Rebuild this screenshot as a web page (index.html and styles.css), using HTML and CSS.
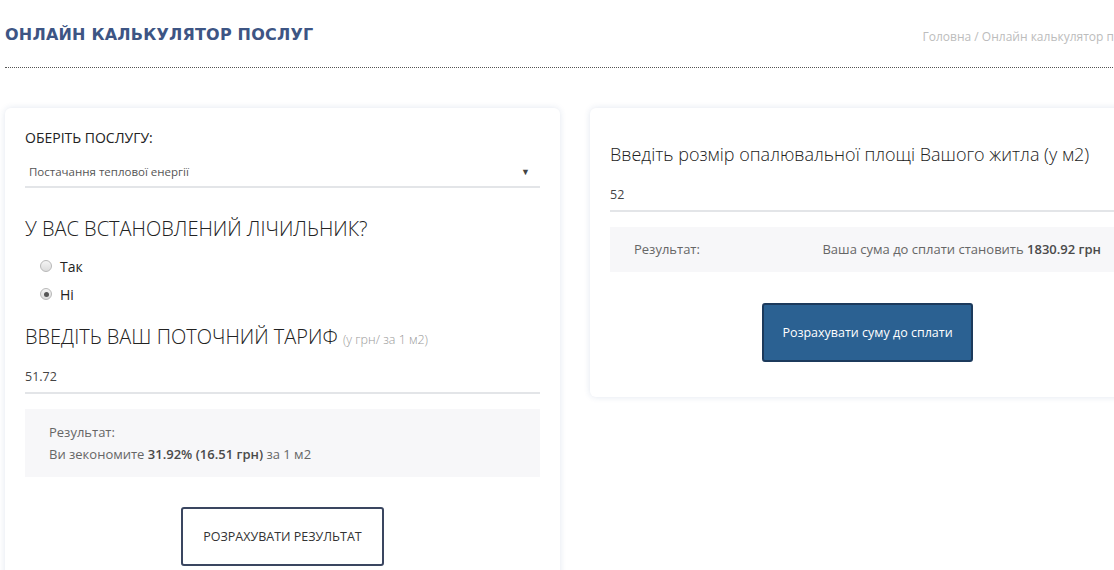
FILE: index.html
```html
<!DOCTYPE html>
<html lang="uk">
<head>
  <meta charset="UTF-8" />
  <title>Онлайн калькулятор послуг</title>
  <link rel="stylesheet" href="styles.css">
</head>
<body>
  <div class="page">
    <div class="page-head">
      <h1 class="page-title">ОНЛАЙН КАЛЬКУЛЯТОР ПОСЛУГ</h1>
      <div class="crumbs">Головна / Онлайн калькулятор послуг</div>
    </div>

    <div class="calc">
      <div class="card">
        <div class="label">ОБЕРІТЬ ПОСЛУГУ:</div>
        <div class="select">
          <span>Постачання теплової енергії</span>
          <span class="arrow">&#9660;</span>
        </div>

        <h3 class="question">У ВАС ВСТАНОВЛЕНИЙ ЛІЧИЛЬНИК?</h3>
        <div class="radios">
          <label class="radio"><input type="radio" name="meter" /> Так</label>
          <label class="radio"><input type="radio" name="meter" checked /> Ні</label>
        </div>

        <h3 class="question q-tariff">ВВЕДІТЬ ВАШ ПОТОЧНИЙ ТАРИФ <small>(у грн/ за 1 м2)</small></h3>
        <input type="text" class="field field-tariff" value="51.72" />

        <div class="result">
          <div>Результат:</div>
          <div>Ви зекономите <b>31.92% (16.51 грн)</b> за 1 м2</div>
        </div>

        <div class="actions">
          <button class="btn btn-outline">РОЗРАХУВАТИ РЕЗУЛЬТАТ</button>
        </div>
      </div>

      <div class="card card-area">
        <h3 class="area-title">Введіть розмір опалювальної площі Вашого житла (у м2)</h3>
        <input type="text" class="field field-area" value="52" />

        <div class="result result-row">
          <span>Результат:</span>
          <span>Ваша сума до сплати становить <b>1830.92 грн</b></span>
        </div>

        <div class="actions">
          <button class="btn btn-blue">Розрахувати суму до сплати</button>
        </div>
      </div>
    </div>
  </div>
</body>
</html>
```

FILE: styles.css
```css
* {
  box-sizing: border-box;
  margin: 0;
  padding: 0;
}

html, body {
  overflow: hidden;
}

body {
  background: #fff;
  font-family: "Open Sans", Arial, sans-serif;
  color: #333;
}

.page {
  width: 1140px;
  margin-left: 5px;
}

.page-head {
  display: flex;
  justify-content: space-between;
  align-items: center;
  height: 68px;
  padding-top: 2px;
  border-bottom: 1px dotted #555;
}

.page-title {
  font-family: "DejaVu Sans", sans-serif;
  font-size: 16px;
  font-weight: bold;
  color: #3d5584;
  letter-spacing: 0.2px;
}

.crumbs {
  font-size: 12px;
  color: #bcbcbc;
  padding-top: 4px;
}

.calc {
  display: grid;
  grid-template-columns: 555px 555px;
  gap: 30px;
  margin-top: 40px;
  align-items: start;
}

.card {
  background: #fff;
  border-radius: 6px;
  padding: 20px 20px 30px;
  box-shadow: 0 0 6px rgba(40, 80, 140, 0.14);
}

.label {
  font-size: 14px;
  line-height: 20px;
  font-weight: 500;
  color: #222;
}

.select {
  display: flex;
  justify-content: space-between;
  margin-top: 10px;
  padding: 5px 10px 5px 4px;
  font-size: 11.5px;
  line-height: 18px;
  color: #555;
  border-bottom: 2px solid #e3e5e8;
}

.arrow {
  font-size: 9px;
  color: #444;
}

.question {
  margin-top: 28px;
  font-size: 20px;
  line-height: 26px;
  font-weight: 300;
  color: #222;
}

.question small {
  font-size: 12.5px;
  color: #999;
}

.q-tariff {
  margin-top: 16px;
}

.radios {
  margin-top: 10px;
  padding-left: 15px;
}

.radio {
  display: flex;
  align-items: center;
  gap: 8px;
  height: 28px;
  font-size: 14px;
  font-weight: 500;
  color: #222;
}

.radio input {
  appearance: none;
  width: 12px;
  height: 12px;
  border-radius: 50%;
  border: 1px solid #b8b8b8;
  background: linear-gradient(#f4f4f4, #dcdcdc);
  display: grid;
  place-content: center;
}

.radio input:checked::before {
  content: "";
  width: 5px;
  height: 5px;
  border-radius: 50%;
  background: #555;
}

.field {
  display: block;
  width: 100%;
  border: none;
  border-bottom: 2px solid #e3e5e8;
  padding: 8px 0 7px;
  font-family: inherit;
  font-size: 12.5px;
  line-height: 18px;
  color: #444;
  outline: none;
}

.field-tariff {
  margin-top: 7px;
  padding-bottom: 6px;
}

.result {
  margin-top: 15px;
  padding: 12px 24px;
  background: #f7f7f9;
  font-size: 13px;
  line-height: 22px;
  color: #666;
}

.result b {
  font-weight: 600;
  color: #4a4a4a;
}

.actions {
  display: flex;
  justify-content: center;
  margin-top: 30px;
}

.btn {
  font-family: inherit;
  font-size: 12.5px;
  line-height: 18px;
  padding: 19px 20px 18px;
  border-radius: 3px;
  cursor: pointer;
}

.btn-outline {
  background: #fff;
  color: #333;
  border: 2px solid #3a4660;
}

.btn-blue {
  background: #2b6192;
  color: #fff;
  border: 2px solid #1c3a5c;
  padding-left: 18px;
  padding-right: 18px;
}

.card-area {
  padding: 33px 20px 35px;
}

.area-title {
  font-size: 18px;
  line-height: 26px;
  font-weight: 300;
  color: #222;
}

.field-area {
  margin-top: 11px;
  padding-bottom: 6px;
}

.result-row {
  display: flex;
  justify-content: space-between;
  padding: 12px 24px;
  line-height: 21px;
}

.card-area .actions {
  margin-top: 31px;
}
```
